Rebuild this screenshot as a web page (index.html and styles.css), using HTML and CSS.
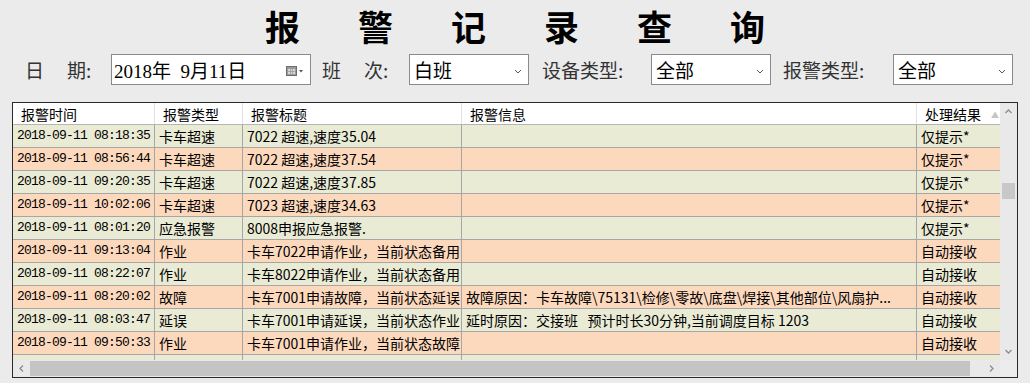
FILE: index.html
```html
<!DOCTYPE html>
<html>
<head>
  <meta charset="UTF-8">
  <title>报警记录查询</title>
  <link rel="stylesheet" href="styles.css">
</head>
<body>
  <h1 class="title">
    <span>报</span><span>警</span><span>记</span><span>录</span><span>查</span><span>询</span>
  </h1>

  <div class="filters">
    <span class="label label-date">日<i class="gap"></i>期:</span>
    <div class="box date-box">
      <span class="date-text">2018年&nbsp;&nbsp;9月11日</span>
      <svg class="cal-icon" width="18" height="12" viewBox="0 0 18 12">
        <rect x="0.5" y="1.5" width="10" height="9" fill="#9a9a9a" stroke="#6e6e6e"/>
        <rect x="2" y="4" width="7" height="5" fill="#d8d8d8"/>
        <path d="M2 6.5h7M4.5 4v5M6.5 4v5" stroke="#9a9a9a" stroke-width="0.8"/>
        <path d="M13 5h4l-2 2.5z" fill="#555"/>
      </svg>
    </div>

    <span class="label label-shift">班<i class="gap"></i>次:</span>
    <div class="box select">
      <span>白班</span>
      <svg class="chev" width="8" height="5" viewBox="0 0 8 5"><path d="M1 1l3 3 3-3" fill="none" stroke="#555" stroke-width="1"/></svg>
    </div>

    <span class="label label-dev">设备类型:</span>
    <div class="box select">
      <span>全部</span>
      <svg class="chev" width="8" height="5" viewBox="0 0 8 5"><path d="M1 1l3 3 3-3" fill="none" stroke="#555" stroke-width="1"/></svg>
    </div>

    <span class="label label-alarm">报警类型:</span>
    <div class="box select">
      <span>全部</span>
      <svg class="chev" width="8" height="5" viewBox="0 0 8 5"><path d="M1 1l3 3 3-3" fill="none" stroke="#555" stroke-width="1"/></svg>
    </div>
  </div>

  <div class="grid-wrap">
    <div class="grid">
      <div class="row head">
        <div class="cell">报警时间</div>
        <div class="cell">报警类型</div>
        <div class="cell">报警标题</div>
        <div class="cell">报警信息</div>
        <div class="cell">处理结果<span class="sort">&#9650;</span></div>
      </div>

      <div class="row green">
        <div class="cell time">2018-09-11 08:18:35</div>
        <div class="cell">卡车超速</div>
        <div class="cell">7022 超速,速度35.04</div>
        <div class="cell"></div>
        <div class="cell">仅提示*</div>
      </div>
      <div class="row peach">
        <div class="cell time">2018-09-11 08:56:44</div>
        <div class="cell">卡车超速</div>
        <div class="cell">7022 超速,速度37.54</div>
        <div class="cell"></div>
        <div class="cell">仅提示*</div>
      </div>
      <div class="row green">
        <div class="cell time">2018-09-11 09:20:35</div>
        <div class="cell">卡车超速</div>
        <div class="cell">7022 超速,速度37.85</div>
        <div class="cell"></div>
        <div class="cell">仅提示*</div>
      </div>
      <div class="row peach">
        <div class="cell time">2018-09-11 10:02:06</div>
        <div class="cell">卡车超速</div>
        <div class="cell">7023 超速,速度34.63</div>
        <div class="cell"></div>
        <div class="cell">仅提示*</div>
      </div>
      <div class="row green">
        <div class="cell time">2018-09-11 08:01:20</div>
        <div class="cell">应急报警</div>
        <div class="cell">8008申报应急报警.</div>
        <div class="cell"></div>
        <div class="cell">仅提示*</div>
      </div>
      <div class="row peach">
        <div class="cell time">2018-09-11 09:13:04</div>
        <div class="cell">作业</div>
        <div class="cell">卡车7022申请作业，当前状态备用</div>
        <div class="cell"></div>
        <div class="cell">自动接收</div>
      </div>
      <div class="row green">
        <div class="cell time">2018-09-11 08:22:07</div>
        <div class="cell">作业</div>
        <div class="cell">卡车8022申请作业，当前状态备用</div>
        <div class="cell"></div>
        <div class="cell">自动接收</div>
      </div>
      <div class="row peach">
        <div class="cell time">2018-09-11 08:20:02</div>
        <div class="cell">故障</div>
        <div class="cell">卡车7001申请故障，当前状态延误</div>
        <div class="cell">故障原因：卡车故障\75131\检修\零故\底盘\焊接\其他部位\风扇护...</div>
        <div class="cell">自动接收</div>
      </div>
      <div class="row green">
        <div class="cell time">2018-09-11 08:03:47</div>
        <div class="cell">延误</div>
        <div class="cell">卡车7001申请延误，当前状态作业</div>
        <div class="cell">延时原因：交接班&nbsp;&nbsp;&nbsp;预计时长30分钟,当前调度目标 1203</div>
        <div class="cell">自动接收</div>
      </div>
      <div class="row peach">
        <div class="cell time">2018-09-11 09:50:33</div>
        <div class="cell">作业</div>
        <div class="cell">卡车7001申请作业，当前状态故障</div>
        <div class="cell"></div>
        <div class="cell">自动接收</div>
      </div>
      <div class="row green">
        <div class="cell time">2018-09-11 08:45:12</div>
        <div class="cell">故障</div>
        <div class="cell">卡车7001申请故障，当前状态作业</div>
        <div class="cell">故障原因：卡车故障</div>
        <div class="cell">自动接收</div>
      </div>
    </div>

    <div class="vbar">
      <svg class="arrow" width="17" height="17" viewBox="0 0 17 17"><path d="M5.5 10l3-3 3 3" fill="none" stroke="#8c8c8c" stroke-width="1.3"/></svg>
      <div class="vtrack"><div class="vthumb"></div></div>
      <svg class="arrow" width="17" height="17" viewBox="0 0 17 17"><path d="M5.5 7l3 3 3-3" fill="none" stroke="#8c8c8c" stroke-width="1.3"/></svg>
    </div>

    <div class="hbar">
      <svg class="arrow" width="17" height="17" viewBox="0 0 17 17"><path d="M10 5.5l-3 3 3 3" fill="none" stroke="#8c8c8c" stroke-width="1.3"/></svg>
      <div class="hthumb"></div>
      <svg class="arrow" width="17" height="17" viewBox="0 0 17 17"><path d="M7 5.5l3 3-3 3" fill="none" stroke="#8c8c8c" stroke-width="1.3"/></svg>
    </div>
    <div class="corner"></div>
  </div>
</body>
</html>
```

FILE: styles.css
```css
/* page */
body {
  margin: 0;
  width: 1030px;
  height: 383px;
  overflow: hidden;
  background-color: #ebebeb;
  font-family: "Noto Sans CJK SC", sans-serif;
  color: #000;
}

.title {
  display: flex;
  justify-content: center;
  gap: 58px;
  margin: 0;
  padding-top: 6px;
  height: 40px;
  font-size: 35px;
  line-height: 40px;
  font-weight: 700;
}

/* filter row */
.filters {
  display: flex;
  align-items: center;
  margin-top: 8px;
  padding-left: 25px;
  height: 31px;
}

.label {
  font-size: 19px;
  color: #333;
  white-space: nowrap;
}

.label .gap {
  display: inline-block;
  width: 23px;
}

.label-date { width: 86px; }
.label-shift { width: 87px; margin-left: 11px; }
.label-dev { width: 109px; margin-left: 13px; }
.label-alarm { width: 110px; margin-left: 12px; }

.box {
  box-sizing: border-box;
  height: 31px;
  display: flex;
  align-items: center;
  background-color: #fff;
  border: 1px solid #8a8a8a;
  font-size: 19px;
}

.date-box {
  width: 200px;
  padding-left: 2px;
}

.date-text {
  font-family: "Liberation Serif", "Noto Sans CJK SC", serif;
  font-size: 19px;
}

.cal-icon {
  margin-left: auto;
  margin-right: 6px;
  margin-top: 2px;
}

.select {
  width: 120px;
  padding-left: 4px;
  padding-right: 6px;
}

.select .chev {
  margin-left: auto;
  margin-top: 3px;
}

/* data grid */
.grid-wrap {
  box-sizing: border-box;
  margin: 17px 0 0 12px;
  width: 1006px;
  height: 276px;
  border: 1px solid #2a2a2a;
  display: grid;
  grid-template-columns: 987px 17px;
  grid-template-rows: 257px 17px;
}

.grid {
  overflow: hidden;
  background-color: #fff;
}

.row {
  display: grid;
  grid-template-columns: 142px 88px 219px 455px 83px;
  height: 23px;
  box-sizing: border-box;
  border-bottom: 1px solid #a6a6a6;
  font-size: 14px;
  line-height: 22px;
}

.row.head {
  height: 22px;
  line-height: 21px;
  background-color: #fff;
  border-bottom-color: #b5b5b5;
}

.row.head .cell {
  border-right-color: #e2e2e2;
  padding-top: 1px;
  padding-left: 8px;
}

.row.green { background-color: #e9ebd5; }
.row.peach { background-color: #fcd9bd; }

.cell {
  position: relative;
  box-sizing: border-box;
  padding-left: 4px;
  border-right: 1px solid #a6a6a6;
  white-space: nowrap;
  overflow: hidden;
}

.cell:last-child { border-right: none; }

.cell.time {
  font-family: "Liberation Mono", monospace;
  font-size: 13px;
  letter-spacing: -0.8px;
}

.sort {
  position: absolute;
  right: 1px;
  top: 1px;
  font-size: 8px;
  color: #c4c4c4;
}

/* scroll bars */
.vbar {
  display: flex;
  flex-direction: column;
  background-color: #e9e9e9;
}

.vbar .arrow,
.hbar .arrow {
  flex: none;
  display: block;
}

.vtrack {
  flex: 1;
  position: relative;
}

.vthumb {
  position: absolute;
  left: 2px;
  right: 2px;
  top: 63px;
  height: 16px;
  background-color: #c8c8c8;
}

.hbar {
  display: flex;
  align-items: center;
  background-color: #e9e9e9;
}

.hthumb {
  flex: 1;
  height: 15px;
  margin: 0 13px 0 0;
  background-color: #c4c4c4;
}

.corner {
  background-color: #ececec;
}
```
